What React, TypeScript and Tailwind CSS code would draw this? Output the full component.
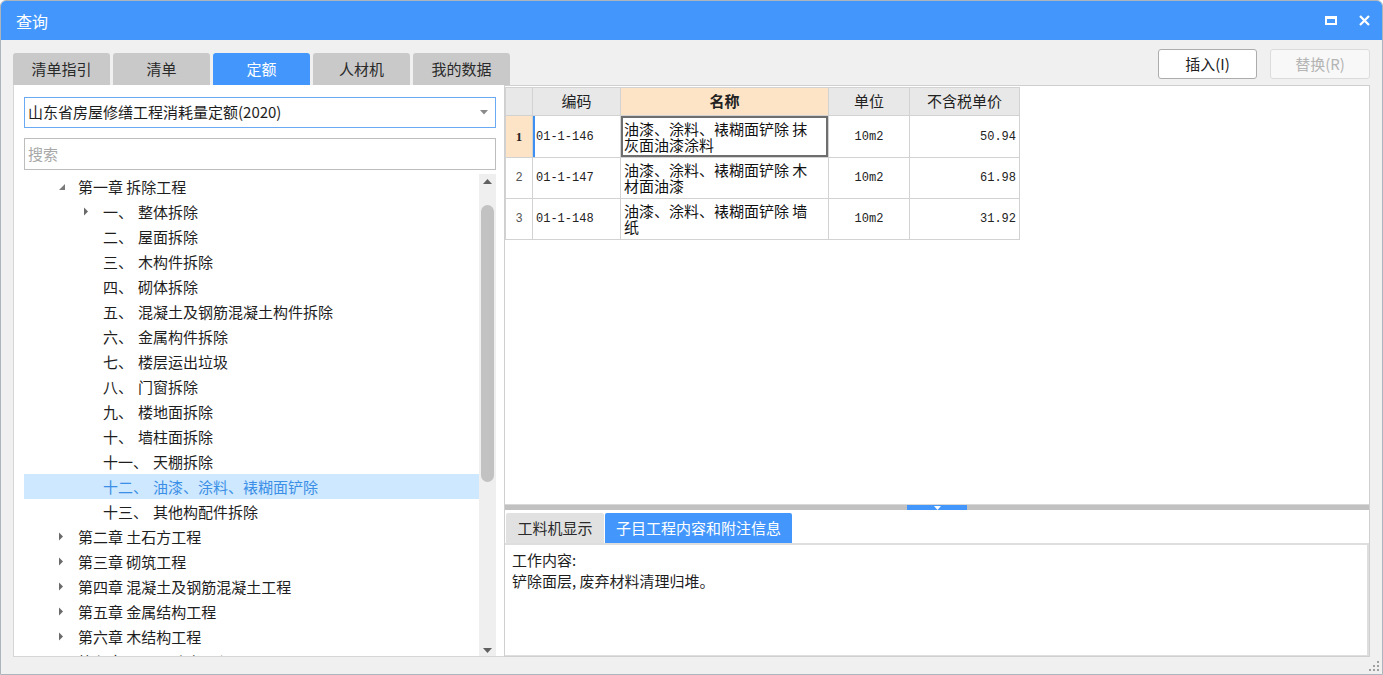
import React from "react";

type Node = {
  level: 0 | 1;
  num?: string;
  label: string;
  arrow?: "open" | "closed";
  selected?: boolean;
};

const tree: Node[] = [
  { level: 0, label: "第一章 拆除工程", arrow: "open" },
  { level: 1, num: "一、", label: "整体拆除", arrow: "closed" },
  { level: 1, num: "二、", label: "屋面拆除" },
  { level: 1, num: "三、", label: "木构件拆除" },
  { level: 1, num: "四、", label: "砌体拆除" },
  { level: 1, num: "五、", label: "混凝土及钢筋混凝土构件拆除" },
  { level: 1, num: "六、", label: "金属构件拆除" },
  { level: 1, num: "七、", label: "楼层运出垃圾" },
  { level: 1, num: "八、", label: "门窗拆除" },
  { level: 1, num: "九、", label: "楼地面拆除" },
  { level: 1, num: "十、", label: "墙柱面拆除" },
  { level: 1, num: "十一、", label: "天棚拆除" },
  { level: 1, num: "十二、", label: "油漆、涂料、裱糊面铲除", selected: true },
  { level: 1, num: "十三、", label: "其他构配件拆除" },
  { level: 0, label: "第二章 土石方工程", arrow: "closed" },
  { level: 0, label: "第三章 砌筑工程", arrow: "closed" },
  { level: 0, label: "第四章 混凝土及钢筋混凝土工程", arrow: "closed" },
  { level: 0, label: "第五章 金属结构工程", arrow: "closed" },
  { level: 0, label: "第六章 木结构工程", arrow: "closed" },
  { level: 0, label: "第七章 屋面及防水工程", arrow: "closed" },
];

const rows = [
  { n: "1", code: "01-1-146", name: ["油漆、涂料、裱糊面铲除 抹", "灰面油漆涂料"], unit: "10m2", price: "50.94" },
  { n: "2", code: "01-1-147", name: ["油漆、涂料、裱糊面铲除 木", "材面油漆"], unit: "10m2", price: "61.98" },
  { n: "3", code: "01-1-148", name: ["油漆、涂料、裱糊面铲除 墙", "纸"], unit: "10m2", price: "31.92" },
];

function Arrow({ kind }: { kind: "open" | "closed" }) {
  if (kind === "open") {
    return (
      <svg width="8" height="8" viewBox="0 0 8 8">
        <path d="M7 1 L7 7 L1 7 Z" fill="#7a7a7a" />
      </svg>
    );
  }
  return (
    <svg width="6" height="9" viewBox="0 0 6 9">
      <path d="M1 0.5 L5 4.5 L1 8.5 Z" fill="#6a6a6a" />
    </svg>
  );
}

const tabs = ["清单指引", "清单", "定额", "人材机", "我的数据"];

export default function App() {
  return (
    <div className="w-[1383px] h-[675px] overflow-hidden bg-[#f0f0f0] border border-[#aeb4bb] rounded-t-[6px] flex flex-col font-['Microsoft_YaHei','Noto_Sans_CJK_SC',sans-serif] text-[#1e1e1e]">
      {/* title bar */}
      <div className="h-[39px] shrink-0 bg-[#4397fc] flex items-center justify-between pl-[15px] pr-[12px]">
        <span className="text-white text-[16px] leading-[20px]">查询</span>
        <div className="flex items-center gap-[22px]">
          <div className="w-[12px] h-[9px] border-2 border-t-[3px] border-white" />
          <svg width="11" height="11" viewBox="0 0 11 11">
            <path d="M1 1 L10 10 M10 1 L1 10" stroke="#fff" strokeWidth="2.2" />
          </svg>
        </div>
      </div>

      <div className="flex-1 flex flex-col px-[12px] pb-[17px]">
        {/* tabs + buttons */}
        <div className="h-[45px] shrink-0 flex items-end justify-between">
          <div className="flex gap-[3px]">
            {tabs.map((t) => (
              <div
                key={t}
                className={
                  t === "定额"
                    ? "w-[97px] h-[32px] rounded-t-[3px] bg-[#4397fc] text-white text-[15px] flex items-center justify-center"
                    : "w-[97px] h-[32px] rounded-t-[3px] bg-[#c9c9c9] text-[#2a2a2a] text-[15px] flex items-center justify-center"
                }
              >
                {t}
              </div>
            ))}
          </div>
          <div className="self-start mt-[9px] flex gap-[13px]">
            <div className="w-[99px] h-[30px] bg-white border border-[#acacac] rounded-[3px] flex items-center justify-center text-[15px] text-[#222]">
              插入(I)
            </div>
            <div className="w-[100px] h-[30px] bg-[#f8f8f8] border border-[#dcdcdc] rounded-[3px] flex items-center justify-center text-[15px] text-[#b4b4b4]">
              替换(R)
            </div>
          </div>
        </div>

        {/* panels */}
        <div className="h-[572px] flex">
          {/* left */}
          <div className="w-[491px] shrink-0 bg-white border-l border-b border-[#d6d6d6] flex flex-col pl-[10px] pr-[8px] pt-[12px]">
            <div className="h-[31px] border border-[#6aa9f4] pl-[3px] pr-[7px] flex items-center justify-between text-[15px]">
              <span>山东省房屋修缮工程消耗量定额(2020)</span>
              <svg width="8" height="5" viewBox="0 0 8 5">
                <path d="M0 0 L8 0 L4 4.5 Z" fill="#8a8a8a" />
              </svg>
            </div>
            <div className="mt-[10px] h-[32px] border border-[#bdbdbd] pl-[3px] flex items-center text-[15px] text-[#a8a8a8]">
              搜索
            </div>
            <div className="mt-[4px] flex-1 flex overflow-hidden">
              <div className="flex-1 overflow-hidden">
                {tree.map((n, i) => (
                  <div
                    key={i}
                    className={
                      (n.selected ? "bg-[#cde8ff] text-[#3b8fe6] " : "") +
                      "h-[25px] flex items-center text-[15px] leading-[25px] whitespace-pre " +
                      (n.level === 0 ? "pl-[34px]" : "pl-[59px]")
                    }
                  >
                    <div className="w-[20px] shrink-0 flex items-center">
                      {n.arrow ? <Arrow kind={n.arrow} /> : null}
                    </div>
                    {n.num ? (
                      <>
                        <span>{n.num}</span>
                        <span className="ml-[5px]">{n.label}</span>
                      </>
                    ) : (
                      <span>{n.label}</span>
                    )}
                  </div>
                ))}
              </div>
              <div className="w-[17px] shrink-0 bg-[#efefef] flex flex-col items-center">
                <div className="h-[10px] flex items-end">
                  <svg width="9" height="5" viewBox="0 0 9 5">
                    <path d="M0 5 L9 5 L4.5 0 Z" fill="#606060" />
                  </svg>
                </div>
                <div className="mt-[21px] w-[13px] h-[277px] rounded-full bg-[#c2c2c2]" />
                <div className="flex-1" />
                <div className="h-[8px] flex items-start">
                  <svg width="9" height="5" viewBox="0 0 9 5">
                    <path d="M0 0 L9 0 L4.5 5 Z" fill="#606060" />
                  </svg>
                </div>
              </div>
            </div>
          </div>

          {/* right */}
          <div className="flex-1 bg-white border border-[#cfcfcf] flex flex-col">
            <div className="h-[418px] shrink-0 pt-[1px]">
              <table className="border-collapse table-fixed w-[514px]">
                <colgroup>
                  <col className="w-[27px]" />
                  <col className="w-[88px]" />
                  <col className="w-[208px]" />
                  <col className="w-[81px]" />
                  <col className="w-[110px]" />
                </colgroup>
                <thead>
                  <tr className="h-[28px]">
                    <th className="border border-[#d2d2d2] bg-[#e8e8e8]" />
                    <th className="border border-[#d2d2d2] bg-[#e8e8e8] font-normal text-[15px] text-[#222]">编码</th>
                    <th className="border border-[#d2d2d2] bg-[#fde4c6] font-bold text-[15px] text-[#222]">名称</th>
                    <th className="border border-[#d2d2d2] bg-[#e8e8e8] font-normal text-[15px] text-[#222]">单位</th>
                    <th className="border border-[#d2d2d2] bg-[#e8e8e8] font-normal text-[15px] text-[#222]">不含税单价</th>
                  </tr>
                </thead>
                <tbody>
                  {rows.map((r, i) => (
                    <tr key={r.n} className={i === 0 ? "h-[42px]" : "h-[41px]"}>
                      <td
                        className={
                          i === 0
                            ? "border border-[#d2d2d2] bg-[#fde4c6] text-center font-['Liberation_Serif',serif] font-bold text-[13px] text-[#222]"
                            : "border border-[#d2d2d2] text-center font-['Liberation_Mono',monospace] text-[12px] text-[#555]"
                        }
                      >
                        {r.n}
                      </td>
                      <td
                        className={
                          (i === 0 ? "shadow-[inset_2px_0_0_#3d8ff0] " : "") +
                          "border border-[#d2d2d2] pl-[3px] font-['Liberation_Mono',monospace] text-[12px] text-[#222]"
                        }
                      >
                        {r.code}
                      </td>
                      <td
                        className={
                          (i === 0 ? "shadow-[inset_0_0_0_2px_#6e6e6e] " : "") +
                          "border border-[#d2d2d2] pl-[3px] text-[15px] leading-[16px] text-[#111] whitespace-nowrap"
                        }
                      >
                        {r.name[0]}
                        <br />
                        {r.name[1]}
                      </td>
                      <td className="border border-[#d2d2d2] text-center font-['Liberation_Mono',monospace] text-[12px] text-[#222]">
                        {r.unit}
                      </td>
                      <td className="border border-[#d2d2d2] text-right pr-[3px] font-['Liberation_Mono',monospace] text-[12px] text-[#222]">
                        {r.price}
                      </td>
                    </tr>
                  ))}
                </tbody>
              </table>
            </div>

            {/* splitter */}
            <div className="h-[6px] shrink-0 bg-[#c1c1c1] border-t border-[#d8d8d8] flex">
              <div className="ml-[402px] w-[60px] bg-[#4397fc] flex items-center justify-center">
                <svg width="7" height="4" viewBox="0 0 7 4">
                  <path d="M0 0 L7 0 L3.5 4 Z" fill="#fff" />
                </svg>
              </div>
            </div>

            {/* bottom tabs */}
            <div className="h-[33px] shrink-0 pt-[3px] flex items-end pl-[1px] gap-[1px]">
              <div className="w-[98px] h-[30px] rounded-t-[2px] bg-[#e1e1e1] text-[15px] text-[#2a2a2a] flex items-center justify-center">
                工料机显示
              </div>
              <div className="w-[187px] h-[30px] rounded-t-[2px] bg-[#4397fc] text-[15px] text-white flex items-center justify-center">
                子目工程内容和附注信息
              </div>
            </div>

            {/* content */}
            <div className="flex-1 border-t-2 border-r-2 border-b border-[#dedede] pl-[7px] pt-[4px] text-[15px] leading-[21px] text-[#1e1e1e]">
              <div>工作内容:</div>
              <div>铲除面层, 废弃材料清理归堆。</div>
            </div>
          </div>
        </div>
      </div>

      {/* resize grip */}
      <div className="relative">
        <svg className="absolute right-[3px] bottom-[3px]" width="10" height="10" viewBox="0 0 10 10">
          <rect x="8" y="0" width="2" height="2" fill="#a0a0a0" />
          <rect x="4" y="4" width="2" height="2" fill="#a0a0a0" />
          <rect x="8" y="4" width="2" height="2" fill="#a0a0a0" />
          <rect x="0" y="8" width="2" height="2" fill="#a0a0a0" />
          <rect x="4" y="8" width="2" height="2" fill="#a0a0a0" />
          <rect x="8" y="8" width="2" height="2" fill="#a0a0a0" />
        </svg>
      </div>
    </div>
  );
}
